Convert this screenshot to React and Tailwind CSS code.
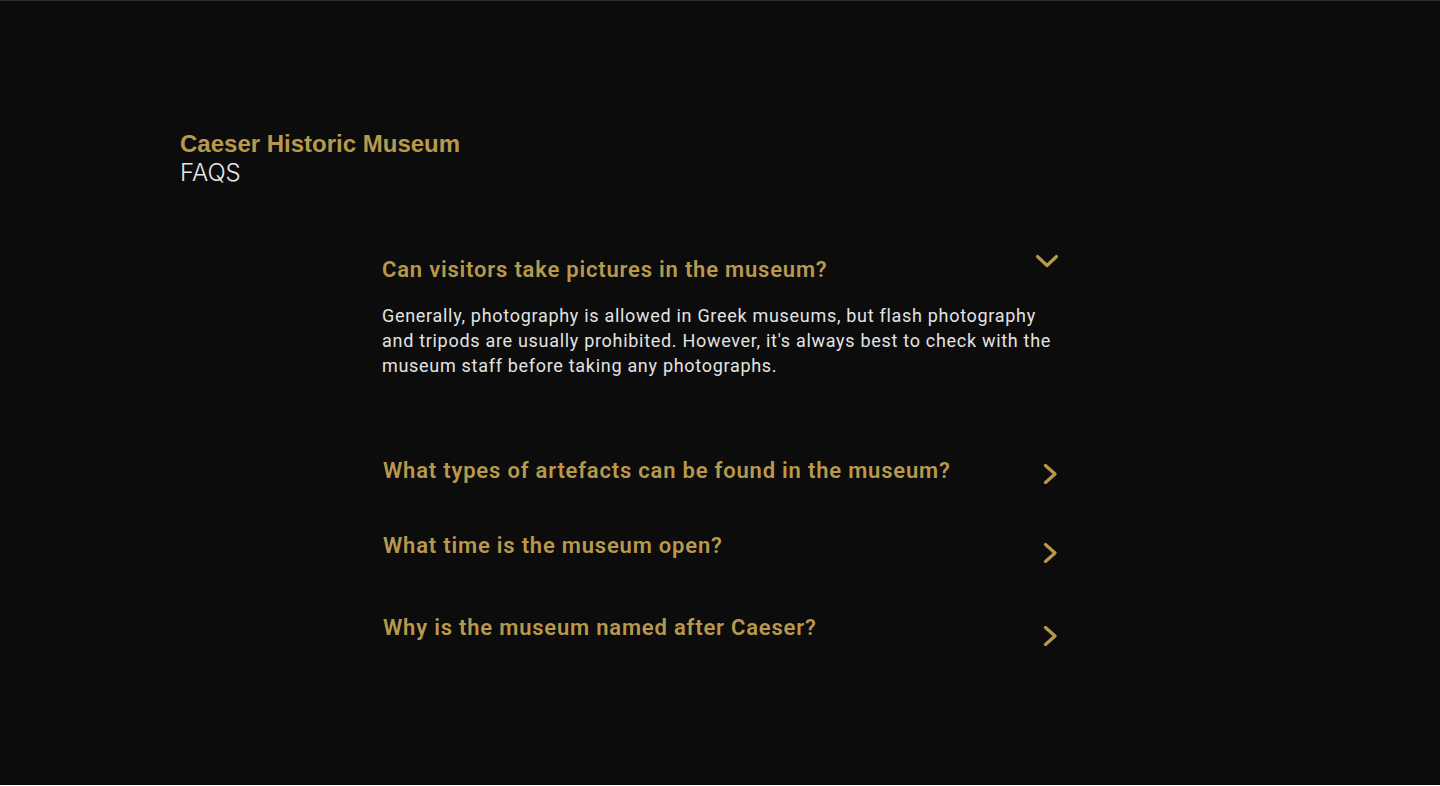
import React, { useState } from 'react'

const faqs = [
  {
    q: 'Can visitors take pictures in the museum?',
    a: "Generally, photography is allowed in Greek museums, but flash photography and tripods are usually prohibited. However, it's always best to check with the museum staff before taking any photographs.",
    row: 'mt-[69px] pl-[1px]',
    icon: 'mt-[-2px]',
  },
  {
    q: 'What types of artefacts can be found in the museum?',
    a: 'The museum holds sculptures, pottery, coins, jewellery and everyday objects from ancient times.',
    row: 'mt-[79px] pl-[2px]',
    icon: 'mt-[7px]',
  },
  {
    q: 'What time is the museum open?',
    a: 'The museum is open daily from 9am to 5pm.',
    row: 'mt-[47px] pl-[2px]',
    icon: 'mt-[11px]',
  },
  {
    q: 'Why is the museum named after Caeser?',
    a: 'The museum is named after Caeser, whose era is the focus of the collection.',
    row: 'mt-[51px] pl-[2px]',
    icon: 'mt-[12px]',
  },
]

const ChevronDown = ({ className = '' }) => (
  <svg width="24" height="15" viewBox="0 0 24 15" fill="none" className={className}>
    <path d="M2.5 2.5 L12 11.5 L21.5 2.5" stroke="#b8994c" strokeWidth="3.2" strokeLinecap="round" strokeLinejoin="round" />
  </svg>
)

const ChevronRight = ({ className = '' }) => (
  <svg width="15" height="20" viewBox="0 0 15 20" fill="none" className={className}>
    <path d="M2.5 1.5 L12 10 L2.5 18.5" stroke="#b8994c" strokeWidth="3.2" strokeLinecap="round" strokeLinejoin="round" />
  </svg>
)

export default function App() {
  const [open, setOpen] = useState(0)

  return (
    <div className="h-[785px] bg-[#0c0c0c] border-t border-[#2b2b2b] overflow-hidden">
      {/* Header */}
      <div className="pt-[129px] px-[180px] font-['Liberation_Sans',Arial,sans-serif]">
        <h1 className="text-[24px] leading-[28px] font-bold text-[#b8994c]">Caeser Historic Museum</h1>
        <p className="text-[24px] leading-[29px] font-light text-[#e6e6e6] font-['Inter',sans-serif]">FAQS</p>
      </div>

      {/* FAQ list */}
      <div className="w-[678px] mx-auto font-['Roboto',sans-serif]">
        {faqs.map((item, i) => (
          <div key={i} className={item.row}>
            <button
              className="w-full flex justify-between items-start text-left"
              onClick={() => setOpen(open === i ? -1 : i)}
            >
              <span className="text-[22px] leading-[28px] font-semibold text-[#b8994c] tracking-[0.8px]">{item.q}</span>
              {open === i ? (
                <ChevronDown className={item.icon} />
              ) : (
                <ChevronRight className={`mr-[1px] ${item.icon}`} />
              )}
            </button>
            {open === i && (
              <p className="mt-[19px] text-[18px] leading-[25px] text-[#e3e3e3] tracking-[0.7px]">{item.a}</p>
            )}
          </div>
        ))}
      </div>
    </div>
  )
}
